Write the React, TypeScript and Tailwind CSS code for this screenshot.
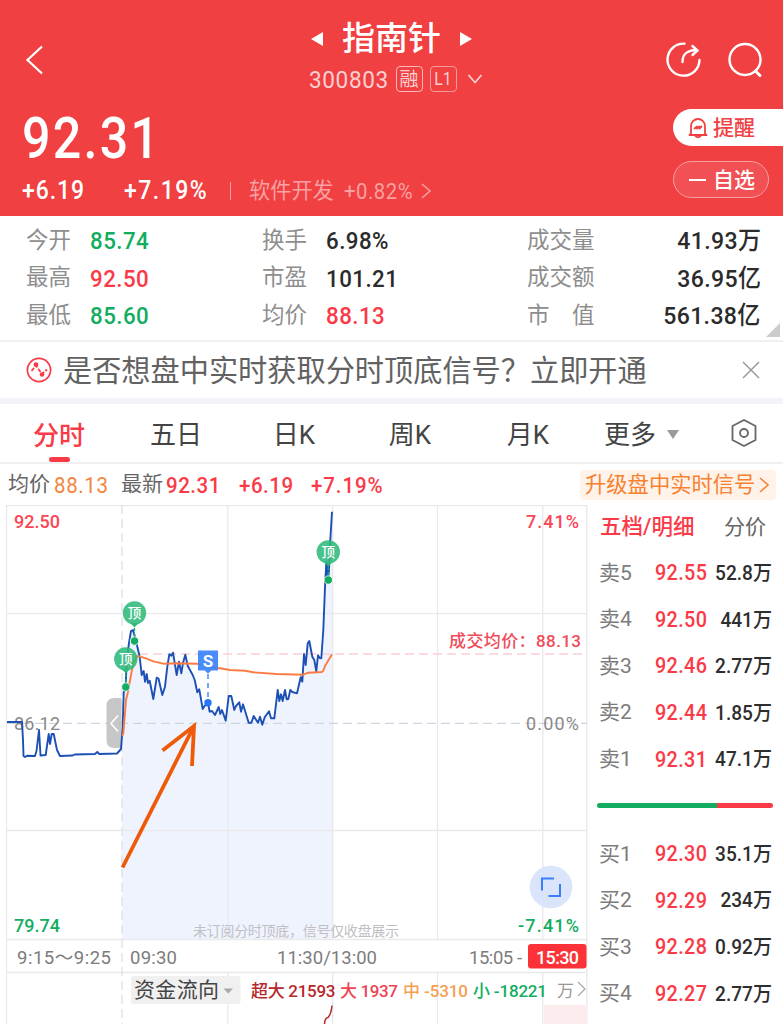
import React from 'react';

const numFont = "font-['Roboto','Noto_Sans_CJK_SC',sans-serif] font-medium";

const stats = [
  [
    { label: '今开', value: '85.74', color: 'text-[#12ad61]' },
    { label: '最高', value: '92.50', color: 'text-[#fa3a47]' },
    { label: '最低', value: '85.60', color: 'text-[#12ad61]' },
  ],
  [
    { label: '换手', value: '6.98%', color: 'text-[#2b2b2b]' },
    { label: '市盈', value: '101.21', color: 'text-[#2b2b2b]' },
    { label: '均价', value: '88.13', color: 'text-[#fa3a47]' },
  ],
];

const totals = [
  { label: '成交量', value: '41.93', unit: '万' },
  { label: '成交额', value: '36.95', unit: '亿' },
  { label: '市　值', value: '561.38', unit: '亿' },
];

const asks = [
  ['卖5', '92.55', '52.8'],
  ['卖4', '92.50', '441'],
  ['卖3', '92.46', '2.77'],
  ['卖2', '92.44', '1.85'],
  ['卖1', '92.31', '47.1'],
];

const bids = [
  ['买1', '92.30', '35.1'],
  ['买2', '92.29', '234'],
  ['买3', '92.28', '0.92'],
  ['买4', '92.27', '2.77'],
];

const preOpen =
  '7,722 22,722 23,740 23.5,756 25,757 27,755.7 35,756 36.5,751 39,730 40.5,755.5 45.7,755 48.7,734 50,744 51.7,734 53.7,734 57,750 60,756 72.7,755.5 74.7,754.5 95,754 97.3,752 99.3,754 117,753.5 121,749 122,736';

const price =
  '122,736 122.7,727 123.7,693 125.7,684 126.7,660 129,643 131,631 133,630 136,641 139.7,657 141.7,675 143.7,671 145,681.7 146.7,674 148,683 149.7,680.7 153.3,699 156.7,677.7 158.5,678.5 162.3,695 165,686.7 167.3,666.7 169.3,654.3 171.3,655.7 173,652.7 176.7,675 179,661.7 181.3,673.3 183,663 185.3,654.7 187.7,665.7 192.7,675 194.7,680 197.3,692.3 199.3,689.3 202.7,709 204.5,706 208,703 209.7,711.7 212,711 215,715 218.7,707 220.3,714 222,710 225.7,720.7 227.5,706 228.7,696 231.3,696 234.3,710 236,706 239.3,702.3 241,711.7 243,704.3 248.7,722.7 251.3,722.7 253.7,716 258,722.7 260,716.7 262.3,724.7 264.7,717.3 269,711.3 271,718.3 274.3,718.3 277.7,690 279.3,701 281,694.3 282.7,701 285,690 286.7,699.3 288.3,699 290.3,690 292.3,692 297,693.3 300.7,677.3 302.3,681.7 304,654 305.7,665 307.7,643.3 309.3,641 312.3,656.7 314.3,660 316.3,671.3 318,655.3 319.7,658 321.3,658.3 323.3,630 325.3,580 326.5,562 328.3,580 329.3,563 330.3,540 332,511.7';

const average =
  '122.5,736 123.3,733 125,713 126,700 127.7,693 130.7,676.7 133.3,663 137.3,656 140,656.7 146.7,658.7 153.3,661.3 163.3,663.7 176.7,663.3 196.7,663.7 213,667.7 220,668.3 230,670 245,670.7 253.3,672.3 276.7,674 303.3,674.7 308.3,672.7 321.7,672 323.3,670.7 325,666 332,654.3';

function TopPin({ x, y }: { x: number; y: number }) {
  return (
    <g>
      <path d={`M${x - 4} ${y + 10} h8 l-4 4.5z`} fill="#2dba7a" />
      <circle cx={x} cy={y} r="11.7" fill="#2dba7a" fillOpacity="0.88" />
      <text x={x} y={y + 5} fontSize="13.5" fontWeight="500" fill="#fff" textAnchor="middle">顶</text>
      <path d={`M${x} ${y + 15}v9`} stroke="#12ad61" strokeWidth="1.3" strokeDasharray="3 2" />
      <circle cx={x} cy={y + 28} r="4.2" fill="#12ad61" stroke="#fff" strokeWidth="0.8" />
    </g>
  );
}

function Chart() {
  return (
    <svg className="block h-[519px] w-[588px] font-['Roboto','Noto_Sans_CJK_SC',sans-serif]" viewBox="0 505 588 519">
      <polygon points={`${price} 332,939 122,939`} fill="#eff3fe" />
      <g stroke="#e9e9eb" strokeWidth="1.3" fill="none">
        <path d="M6.5 505V1024M586.8 505V1024M6 505.5H587M6 613.7H587M6 830.5H587M6 939.5H587M6 972.5H587" />
        <path d="M227.8 505V939M332.7 505V939M437.5 505V939M542.8 505V939M227.8 973V1024M332.7 973V1024M437.5 973V1024M542.8 973V1024" />
        <path d="M122 505V1024" strokeDasharray="9 5" stroke="#dedfe3" />
      </g>
      <path d="M7 723.3H587" stroke="#ccd5e0" strokeWidth="1.3" strokeDasharray="9 5" />
      <path d="M139 654H587" stroke="#fbd0d4" strokeWidth="1.3" strokeDasharray="9 5" />

      <text x="14" y="527.5" fontSize="18" fontWeight="500" fill="#fa4655" textLength="46">92.50</text>
      <text x="14" y="729.5" fontSize="18" fill="#888" textLength="46">86.12</text>
      <text x="14" y="931.5" fontSize="18" fontWeight="500" fill="#12ad61" textLength="46">79.74</text>
      <text x="526" y="527.5" fontSize="18" fontWeight="500" fill="#fa4655" textLength="53">7.41%</text>
      <text x="526" y="729.5" fontSize="18" fill="#888" textLength="53">0.00%</text>
      <text x="518" y="931.5" fontSize="18" fontWeight="500" fill="#12ad61" textLength="61">-7.41%</text>
      <text x="449" y="647" fontSize="17" fontWeight="500" fill="#f04b59" textLength="132">成交均价：88.13</text>
      <text x="193" y="936" fontSize="14" fill="#bfc0c4" textLength="206">未订阅分时顶底，信号仅收盘展示</text>

      {/* drawer handle */}
      <path d="M121.5 698h-7q-8 0-8 8v34q0 8 8 8h7z" fill="#bdbdbd" fillOpacity="0.85" />
      <path d="M118 715.5l-7 8 7 8" stroke="#fff" strokeWidth="1.6" fill="none" />

      <g fill="none" strokeLinejoin="round">
        <polyline points={preOpen} stroke="#1c50b5" strokeWidth="1.9" />
        <polyline points={price} stroke="#1c50b5" strokeWidth="1.9" />
        <path d="M326.5 562v16" stroke="#1c50b5" strokeWidth="1.9" />
        <polyline points={average} stroke="#fb7b42" strokeWidth="1.9" />
      </g>

      <TopPin x={134.5} y={613} />
      <TopPin x={125.8} y={659} />
      <TopPin x={328.3} y={552} />

      <path d="M208 674v25" stroke="#5c9afa" strokeWidth="1.7" strokeDasharray="5 4" />
      <path d="M198 650.5h20v20h-6.5l-3.5 3-3.5-3h-6.5z" fill="#3d83fb" fillOpacity="0.93" />
      <text x="208" y="666.5" fontSize="17" fontWeight="700" fill="#fff" textAnchor="middle">S</text>
      <circle cx="208" cy="702.8" r="3.7" fill="#2876f8" />

      <path d="M122.5 867.5L194 726M162.5 750.5L194 726L192 766" stroke="#ee5a07" strokeWidth="3.8" fill="none" />

      <circle cx="551" cy="887" r="21.3" fill="#d6e2fc" fillOpacity="0.9" />
      <path d="M542 890.5V878.5H554M560 884V896H548.5" stroke="#3a7efa" strokeWidth="2" fill="none" />

      <g fontSize="18.5" fill="#7c7c7c">
        <text x="17" y="964" textLength="94">9:15～9:25</text>
        <text x="130" y="964" textLength="47">09:30</text>
        <text x="277" y="964" textLength="100">11:30/13:00</text>
        <text x="469" y="964" textLength="53">15:05 -</text>
      </g>
      <rect x="528" y="944" width="58.5" height="24.5" rx="3" fill="#fb3338" />
      <text x="536" y="963.5" fontSize="18" fontWeight="500" fill="#fff" textLength="43">15:30</text>

      <rect x="544" y="1005" width="43" height="19" fill="#fdecee" />
      <path d="M332 1005.5c-.5 5-2 10-4 12q-3 0-3.5 6.5" stroke="#b3262a" strokeWidth="1.5" fill="none" />
      <rect x="131" y="976" width="109.5" height="28" rx="3" fill="#f0f0f0" />
      <text x="134" y="996.7" fontSize="21" fill="#444" textLength="85">资金流向</text>
      <path d="M223.5 988.5h9.5l-4.750 5z" fill="#a8a8a8" />
      <g fontSize="17" fontWeight="500">
        <text x="251" y="997" fill="#b8272b" textLength="84.5">超大 21593</text>
        <text x="340" y="997" fill="#f04353" textLength="58">大 1937</text>
        <text x="403" y="997" fill="#f4a052" textLength="65">中 -5310</text>
        <text x="473" y="997" fill="#12ad61" textLength="74">小 -18221</text>
        <text x="557" y="997" fontWeight="400" fill="#999">万</text>
      </g>
      <path d="M578 982l7 7-7 7" stroke="#aaa" strokeWidth="1.3" fill="none" />
    </svg>
  );
}

function DepthRow({ row }: { row: string[] }) {
  return (
    <div className="flex h-[46.6px] items-center pl-[11px] pr-[11px]">
      <span className="w-[56px] text-[21px] text-[#7c7c7c]">{row[0]}</span>
      <span className={`${numFont} w-[50px] origin-left scale-x-[0.92] whitespace-nowrap text-[21.5px] tracking-[0.4px] text-[#fa3a47]`}>{row[1]}</span>
      <span className={`${numFont} flex-1 origin-right scale-x-[0.93] whitespace-nowrap text-right text-[20.5px] text-[#2e2e2e]`}>{row[2]}万</span>
    </div>
  );
}

export default function App() {
  return (
    <div className="h-[1024px] w-[783px] overflow-hidden bg-white font-['Roboto','Noto_Sans_CJK_SC',sans-serif]">
      <header className="flex h-[216px] flex-col bg-[#f04042] text-white">
        <div className="flex h-[106px] items-start justify-between">
          <svg className="ml-6 mt-[44px]" width="22" height="32" fill="none" stroke="#fff" strokeWidth="2.2">
            <path d="M18 2.500L3.500 16 18 29.500" />
          </svg>
          <div className="ml-[80px] flex flex-col items-center">
            <div className="mr-[8px] mt-[16px] flex h-[45px] items-center gap-[19px]">
              <svg width="12" height="16" fill="#fff"><path d="M12 1v14L0 8z" /></svg>
              <h1 className="text-[33px] font-medium leading-none">指南针</h1>
              <svg width="12" height="16" fill="#fff"><path d="M0 1v14l12-7z" /></svg>
            </div>
            <div className="flex h-[36px] items-center text-[#fbd0d1]">
              <span className="w-[79px] origin-left scale-x-[0.92] whitespace-nowrap pt-[2px] text-[24.5px] tracking-[0.7px]">300803</span>
              <span className="ml-[8px] flex h-[26px] w-[27px] items-center justify-center rounded border border-[#f9b9ba] text-[19px] leading-none">融</span>
              <span className="ml-[7px] flex h-[26px] w-[27px] items-center justify-center rounded border border-[#f69a9b] text-[18px] leading-none">
                <span className="scale-x-[0.88]">L1</span>
              </span>
              <svg className="ml-[10px]" width="16" height="12" fill="none" stroke="#fbd0d1" strokeWidth="1.7"><path d="M1.500 2L8 9.500 14.500 2" /></svg>
            </div>
          </div>
          <div className="mr-[20px] mt-[41px] flex gap-[25px]">
            <svg width="37" height="38" fill="none" stroke="#fff" strokeWidth="2.4" strokeLinecap="round">
              <path d="M19.500 2.700A16 16 0 1 0 34.500 19" />
              <path d="M17.500 21c0-8 4-11.500 14-12M27.500 5l5 4.500-5 4.500" />
            </svg>
            <svg width="36" height="38" fill="none" stroke="#fff" strokeWidth="2.4" strokeLinecap="round">
              <circle cx="18" cy="18.5" r="15.5" />
              <path d="M28.500 30l4.500 4.500" strokeWidth="3" />
            </svg>
          </div>
        </div>
        <div className="flex h-[110px] justify-between">
          <div className="flex flex-col">
            <div className="mt-[3px] h-[58px] pl-[22px]">
              <span className="inline-block origin-left scale-x-[0.88] text-[57px] font-medium leading-[60px] tracking-[2.6px]">92.31</span>
            </div>
            <div className={`${numFont} flex h-[46px] items-center pt-[2px] text-[25px]`}>
              <span className="ml-[22px] w-[80px] origin-left scale-x-[0.92] tracking-[1px]">+6.19</span>
              <span className="ml-[22px] w-[106px] origin-left scale-x-[0.92] whitespace-nowrap tracking-[1.6px]">+7.19%</span>
              <i className="h-[18px] w-px bg-[#f69a9b]" />
              <span className="ml-[18px] text-[21.2px] font-normal text-[#f8a0a2]">软件开发</span>
              <span className="ml-[10px] w-[70px] origin-left scale-x-[0.92] whitespace-nowrap text-[22px] font-normal tracking-[0.6px] text-[#f8a0a2]">+0.82%</span>
              <svg className="ml-[7px]" width="11" height="18" fill="none" stroke="#f8a0a2" strokeWidth="1.6"><path d="M1 2l8 7-8 7" /></svg>
            </div>
          </div>
          <div className="flex w-[110px] flex-col gap-[15px] pt-[3px] text-[21px] font-medium">
            <div className="flex h-[37px] items-center rounded-l-full bg-white pl-[15px] text-[#f04042]">
              <svg className="mr-[5px]" width="20" height="22" fill="none" stroke="#f04042" strokeWidth="1.8" strokeLinejoin="round">
                <path d="M3 16.500V9a7 7 0 0 1 14 0v7.500l1.500 1.500h-17zM6.500 18q3.500 4.500 7 0M6 12l3-2.500v2l2.500-2v2l2.500-2.500" />
              </svg>
              <span className="pt-[2px]">提醒</span>
            </div>
            <div className="flex h-[37px] w-[96px] items-center rounded-full border border-[#f8a0a2] bg-[#f15154] pl-[15px]">
              <i className="mr-[7px] h-[2px] w-[17px] bg-white" />
              <span className="pt-[2px]">自选</span>
            </div>
          </div>
        </div>
      </header>

      <section className="relative flex h-[126px] border-b-2 border-[#f0f0f2] pt-[6px]">
        {stats.map((column, index) => (
          <div key={index} className={index === 0 ? 'w-[236px] pl-[26px]' : 'w-[266px] pl-[26px]'}>
            {column.map((item) => (
              <div key={item.label} className="flex h-[37.500px] items-center">
                <span className="w-[64px] text-[22.500px] text-[#8e8e8e]">{item.label}</span>
                <span className={`${numFont} origin-left scale-x-[0.91] pt-[2px] text-[24.500px] tracking-[0.500px] ${item.color}`}>{item.value}</span>
              </div>
            ))}
          </div>
        ))}
        <div className="flex-1 pl-[25px] pr-[22px]">
          {totals.map((item) => (
            <div key={item.label} className="flex h-[37.500px] items-center justify-between">
              <span className="text-[22.500px] text-[#8e8e8e]">{item.label}</span>
              <span className={`${numFont} origin-right scale-x-[0.94] pt-[2px] text-[24.500px] tracking-[0.400px] text-[#2b2b2b]`}>{item.value}{item.unit}</span>
            </div>
          ))}
        </div>
        <svg className="absolute bottom-[3px] right-[3px]" width="14" height="14"><path d="M14 0v14H0z" fill="#ccc" /></svg>
      </section>

      <section className="flex h-[56px] items-center pl-[26px] pr-[23px]">
        <svg width="26" height="26" fill="none" stroke="#fa3a47" strokeWidth="1.7">
          <circle cx="13" cy="13" r="11.6" />
          <path d="M5.500 14l4.500-5.500 6 8.500 5-4.500" strokeDasharray="4 1.5" />
          <circle cx="10" cy="7.5" r="1.5" fill="#fa3a47" />
          <circle cx="16" cy="17.5" r="1.5" fill="#fa3a47" />
        </svg>
        <span className="ml-[11px] flex-1 whitespace-nowrap pt-[4px] text-[29.200px] text-[#626262]">是否想盘中实时获取分时顶底信号？立即开通</span>
        <svg width="18" height="18" stroke="#999" strokeWidth="1.5"><path d="M1 1l16 16M17 1L1 17" /></svg>
      </section>

      <div className="h-[6px] bg-[#f3f3f9]" />

      <nav className="flex h-[60px] items-center border-b-2 border-[#f0f0f2] text-[26px] text-[#444]">
        <div className="flex h-full w-[118px] flex-col items-center justify-between pt-[12px] font-medium text-[#fa3a47]">
          <span className="leading-[40px]">分时</span>
          <i className="h-[5px] w-[21px] rounded-full bg-[#fa3a47]" />
        </div>
        <span className="w-[116px] pt-[4px] text-center">五日</span>
        <span className="w-[120px] pt-[4px] text-center">日K</span>
        <span className="w-[112px] pt-[4px] text-center">周K</span>
        <span className="w-[124px] pt-[4px] text-center">月K</span>
        <span className="ml-[14px] pt-[4px]">更多</span>
        <svg className="ml-[11px] mt-[2px]" width="12" height="9" fill="#999"><path d="M0 0h12L6 9z" /></svg>
        <svg className="ml-[51px]" width="28" height="30" fill="none" stroke="#666" strokeWidth="1.8" strokeLinejoin="round">
          <path d="M14 2l11.500 6v14L14 28 2.500 22V8z" />
          <circle cx="14" cy="15" r="4" />
        </svg>
      </nav>

      <section className="flex h-[41px] items-center pl-[8px] pr-[7px] pt-[1px] text-[21px] text-[#666]">
        <span className="w-[46px]">均价</span>
        <span className="w-[67px] origin-left scale-x-[0.91] pt-[2px] text-[22.500px] tracking-[0.700px] text-[#f4843e]">88.13</span>
        <span className="w-[45px]">最新</span>
        <span className={`${numFont} w-[73px] origin-left scale-x-[0.91] pt-[2px] text-[22.500px] tracking-[0.600px] text-[#fa3a47]`}>92.31</span>
        <span className={`${numFont} w-[72px] origin-left scale-x-[0.91] pt-[2px] text-[22.500px] tracking-[0.600px] text-[#fa3a47]`}>+6.19</span>
        <span className={`${numFont} flex-1 origin-left scale-x-[0.91] pt-[2px] text-[22.500px] tracking-[1px] text-[#fa3a47]`}>+7.19%</span>
        <div className="flex h-[30px] w-[196px] items-center rounded bg-[#fff2e9] pl-[5px] text-[21.300px] text-[#f88130]">
          <span className="whitespace-nowrap">升级盘中实时信号</span>
          <svg className="ml-[4px]" width="11" height="18" fill="none" stroke="#f88130" strokeWidth="1.6"><path d="M1 2l8 7-8 7" /></svg>
        </div>
      </section>

      <main className="flex h-[519px]">
        <Chart />
        <aside className="w-[195px] text-[#666]">
          <div className="flex h-[45px] items-center justify-between pl-[12px] pr-[17px] text-[21px]">
            <span className="text-[21.500px] font-medium text-[#fa3a47]">五档/明细</span>
            <span>分价</span>
          </div>
          {asks.map((row) => <DepthRow key={row[0]} row={row} />)}
          <div className="ml-[9px] mr-[10px] mt-[20px] flex h-[5px] overflow-hidden rounded-full">
            <i className="w-[120px] bg-[#12ad61]" />
            <i className="flex-1 bg-[#fa3a47]" />
          </div>
          <div className="mt-[23px]">
            {bids.map((row) => <DepthRow key={row[0]} row={row} />)}
          </div>
        </aside>
      </main>
    </div>
  );
}
